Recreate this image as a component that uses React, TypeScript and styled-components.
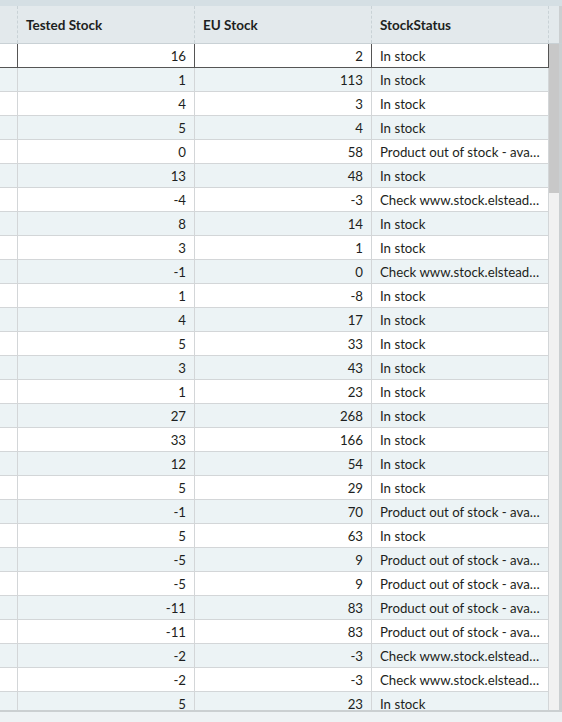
import React from 'react';
import styled, { createGlobalStyle } from 'styled-components';

const GlobalStyle = createGlobalStyle`
  html, body {
    margin: 0;
    padding: 0;
    background: #eef2f4;
  }
  body {
    font-family: Lato, "Liberation Sans", sans-serif;
    color: #1d1f21;
  }
`;

const COLS = ['18px', '177px', '177px', '177px'];

const Frame = styled.div`
  width: 562px;
  height: 722px;
  display: flex;
  flex-direction: column;
  background: #eef2f4;
  overflow: hidden;
`;

const TopStrip = styled.div`
  height: 6px;
  background: #d5dfe4;
  flex: none;
`;

const HeaderRow = styled.div`
  height: 37px;
  display: grid;
  grid-template-columns: ${COLS.join(' ')} 1fr;
  background: #e3e9ec;
  border-bottom: 1px solid #c9d1d5;
  flex: none;
`;

const HeaderCell = styled.div`
  border-right: 1px dashed #c9d2d6;
  display: flex;
  align-items: center;
  padding: 1px 8px 0;
  font-size: 13.5px;
  font-weight: 700;
  white-space: nowrap;
  overflow: hidden;
`;

const HeaderTail = styled.div`
  border-right: 3px solid #cbcfd1;
`;

const Body = styled.div`
  height: 666px;
  display: flex;
  flex: none;
  border-bottom: 2px solid #cbcfd1;
`;

const Rows = styled.div`
  width: 549px;
  overflow: hidden;
`;

const Row = styled.div<{ $alt: boolean; $selected?: boolean }>`
  display: grid;
  grid-template-columns: ${COLS.join(' ')};
  height: ${(p) => (p.$selected ? '25px' : '24px')};
  margin-top: ${(p) => (p.$selected ? '-1px' : '0')};
  background: ${(p) => (p.$alt ? '#ecf3f5' : '#ffffff')};
  box-sizing: border-box;
  border-top: ${(p) => (p.$selected ? '1px solid #555' : 'none')};
  border-bottom: 1px solid ${(p) => (p.$selected ? '#555' : '#d3d6d8')};
`;

const Cell = styled.div<{ $num?: boolean; $selected?: boolean }>`
  border-right: 1px solid ${(p) => (p.$selected ? '#555' : '#d3d6d8')};
  padding: 1px 8px 0;
  font-size: 13.25px;
  line-height: 22px;
  text-align: ${(p) => (p.$num ? 'right' : 'left')};
  white-space: nowrap;
  overflow: hidden;
  text-overflow: ellipsis;
`;

const ScrollTrack = styled.div`
  width: 10px;
  background: #f1f1f1;
  border-right: 3px solid #cbcfd1;
  display: flex;
  flex-direction: column;
`;

const ScrollThumb = styled.div`
  height: 149px;
  background: #c8c8c8;
`;

const IN = 'In stock';
const OUT = 'Product out of stock - available soon';
const CHECK = 'Check www.stock.elsteadlighting.com';

const rows: [number, number, string][] = [
  [16, 2, IN],
  [1, 113, IN],
  [4, 3, IN],
  [5, 4, IN],
  [0, 58, OUT],
  [13, 48, IN],
  [-4, -3, CHECK],
  [8, 14, IN],
  [3, 1, IN],
  [-1, 0, CHECK],
  [1, -8, IN],
  [4, 17, IN],
  [5, 33, IN],
  [3, 43, IN],
  [1, 23, IN],
  [27, 268, IN],
  [33, 166, IN],
  [12, 54, IN],
  [5, 29, IN],
  [-1, 70, OUT],
  [5, 63, IN],
  [-5, 9, OUT],
  [-5, 9, OUT],
  [-11, 83, OUT],
  [-11, 83, OUT],
  [-2, -3, CHECK],
  [-2, -3, CHECK],
  [5, 23, IN],
];

const App = () => {
  return (
    <Frame>
      <GlobalStyle />
      <TopStrip />
      <HeaderRow>
        <HeaderCell />
        <HeaderCell>Tested Stock</HeaderCell>
        <HeaderCell>EU Stock</HeaderCell>
        <HeaderCell>StockStatus</HeaderCell>
        <HeaderTail />
      </HeaderRow>
      <Body>
        <Rows>
          {rows.map(([tested, eu, status], i) => {
            const sel = i === 0;
            return (
              <Row key={i} $alt={i % 2 === 1} $selected={sel}>
                <Cell $selected={sel} />
                <Cell $num $selected={sel}>{tested}</Cell>
                <Cell $num $selected={sel}>{eu}</Cell>
                <Cell $selected={sel}>{status}</Cell>
              </Row>
            );
          })}
        </Rows>
        <ScrollTrack>
          <ScrollThumb />
        </ScrollTrack>
      </Body>
    </Frame>
  );
};

export default App;
